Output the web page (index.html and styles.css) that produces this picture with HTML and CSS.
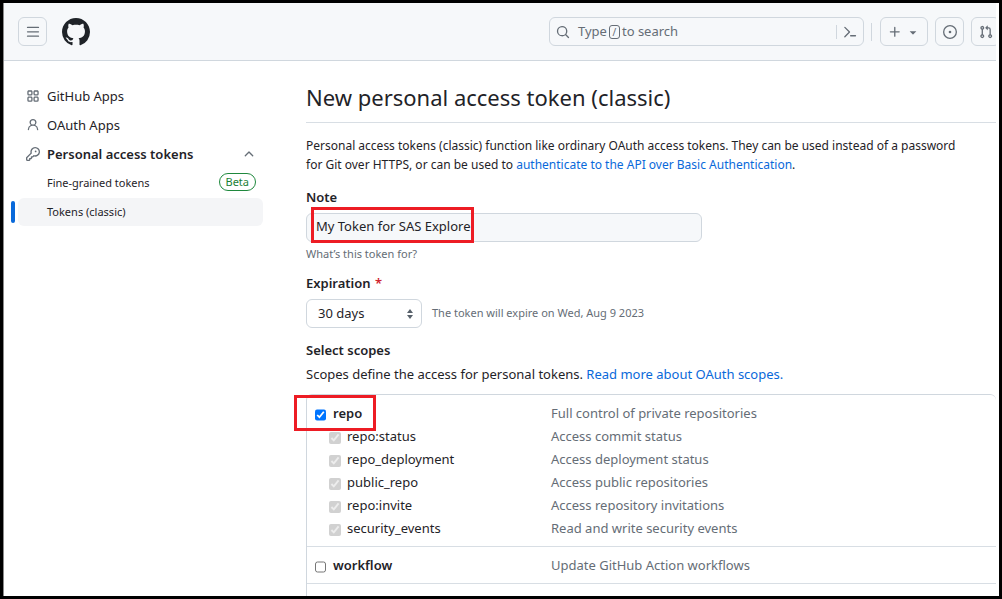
FILE: index.html
```html
<!DOCTYPE html>
<html lang="en">
<head>
<meta charset="utf-8">
<title>New personal access token (classic)</title>
<link rel="stylesheet" href="styles.css">
</head>
<body>
<div class="page">
  <header class="topbar">
    <button class="icon-button" type="button" aria-label="Open menu">
      <svg class="icon" viewBox="0 0 16 16"><path d="M1 2.75A.75.75 0 0 1 1.75 2h12.5a.75.75 0 0 1 0 1.5H1.75A.75.75 0 0 1 1 2.75Zm0 5A.75.75 0 0 1 1.75 7h12.5a.75.75 0 0 1 0 1.5H1.75A.75.75 0 0 1 1 7.75ZM1.75 12h12.5a.75.75 0 0 1 0 1.5H1.75a.75.75 0 0 1 0-1.5Z"/></svg>
    </button>
    <a class="logo" href="#" aria-label="Home">
      <svg viewBox="0 0 16 16"><path d="M8 0c4.42 0 8 3.58 8 8a8.013 8.013 0 0 1-5.45 7.59c-.4.08-.55-.17-.55-.38 0-.27.01-1.13.01-2.2 0-.75-.25-1.23-.54-1.48 1.78-.2 3.65-.88 3.65-3.95 0-.88-.31-1.59-.82-2.15.08-.2.36-1.02-.08-2.12 0 0-.67-.22-2.2.82-.64-.18-1.32-.27-2-.27-.68 0-1.36.09-2 .27-1.53-1.03-2.2-.82-2.2-.82-.44 1.1-.16 1.92-.08 2.12-.51.56-.82 1.28-.82 2.15 0 3.06 1.86 3.75 3.64 3.95-.23.2-.44.55-.51 1.07-.46.21-1.61.55-2.33-.66-.15-.24-.6-.83-1.23-.82-.67.01-.27.38.01.53.34.19.73.9.82 1.13.16.45.68 1.31 2.69.94 0 .67.01 1.3.01 1.49 0 .21-.15.45-.55.38A7.995 7.995 0 0 1 0 8c0-4.42 3.58-8 8-8Z"/></svg>
    </a>
    <div class="tools">
      <div class="search">
        <button class="search-open" type="button">
          <svg class="icon" viewBox="0 0 16 16"><path d="M10.68 11.74a6 6 0 0 1-7.922-8.982 6 6 0 0 1 8.982 7.922l3.04 3.04a.749.749 0 0 1-.326 1.275.749.749 0 0 1-.734-.215ZM11.5 7a4.499 4.499 0 1 0-8.997 0A4.499 4.499 0 0 0 11.5 7Z"/></svg>
          <span class="search-text">Type <kbd class="key">/</kbd> to search</span>
        </button>
        <button class="search-command" type="button" aria-label="Command palette">
          <svg class="icon" viewBox="0 0 16 16"><path d="m6.354 8.04-4.773 4.773a.75.75 0 1 0 1.061 1.06L7.945 8.57a.75.75 0 0 0 0-1.06L2.642 2.206a.75.75 0 0 0-1.06 1.061L6.353 8.04ZM8.75 11.5a.75.75 0 0 0 0 1.5h5.5a.75.75 0 0 0 0-1.5h-5.5Z"/></svg>
        </button>
      </div>
      <span class="divider"></span>
      <button class="icon-button create" type="button" aria-label="Create new">
        <svg class="icon" viewBox="0 0 16 16"><path d="M7.75 2a.75.75 0 0 1 .75.75V7h4.25a.75.75 0 0 1 0 1.5H8.5v4.25a.75.75 0 0 1-1.5 0V8.5H2.75a.75.75 0 0 1 0-1.5H7V2.75A.75.75 0 0 1 7.75 2Z"/></svg>
        <svg class="icon" viewBox="0 0 16 16"><path d="m4.427 7.427 3.396 3.396a.25.25 0 0 0 .354 0l3.396-3.396A.25.25 0 0 0 11.396 7H4.604a.25.25 0 0 0-.177.427Z"/></svg>
      </button>
      <button class="icon-button" type="button" aria-label="Issues">
        <svg class="icon" viewBox="0 0 16 16"><path d="M8 9.5a1.5 1.5 0 1 0 0-3 1.5 1.5 0 0 0 0 3Z"/><path d="M8 0a8 8 0 1 1 0 16A8 8 0 0 1 8 0ZM1.5 8a6.5 6.5 0 1 0 13 0 6.5 6.5 0 0 0-13 0Z"/></svg>
      </button>
      <button class="icon-button" type="button" aria-label="Pull requests">
        <svg class="icon" viewBox="0 0 16 16"><path d="M1.5 3.25a2.25 2.25 0 1 1 3 2.122v5.256a2.251 2.251 0 1 1-1.5 0V5.372A2.25 2.25 0 0 1 1.5 3.25Zm5.677-.177L9.573.677A.25.25 0 0 1 10 .854V2.5h1A2.5 2.5 0 0 1 13.5 5v5.628a2.251 2.251 0 1 1-1.5 0V5a1 1 0 0 0-1-1h-1v1.646a.25.25 0 0 1-.427.177L7.177 3.427a.25.25 0 0 1 0-.354ZM3.75 2.5a.75.75 0 1 0 0 1.5.75.75 0 0 0 0-1.5Zm0 9.5a.75.75 0 1 0 0 1.5.75.75 0 0 0 0-1.5Zm8.25.75a.75.75 0 1 0 1.5 0 .75.75 0 0 0-1.5 0Z"/></svg>
      </button>
    </div>
  </header>

  <div class="columns">
    <nav class="sidebar" aria-label="Developer settings">
      <a class="nav-item" href="#">
        <svg class="icon" viewBox="0 0 16 16"><path d="M1.5 3.25c0-.966.784-1.75 1.75-1.75h2.5c.966 0 1.75.784 1.75 1.75v2.5A1.75 1.75 0 0 1 5.75 7.5h-2.5A1.75 1.75 0 0 1 1.500 5.75Zm7 0c0-.966.784-1.75 1.75-1.75h2.5c.966 0 1.75.784 1.75 1.75v2.5a1.75 1.75 0 0 1-1.750 1.75h-2.5A1.75 1.75 0 0 1 8.500 5.75Zm-7 7c0-.966.784-1.75 1.75-1.75h2.5c.966 0 1.75.784 1.75 1.75v2.5a1.75 1.75 0 0 1-1.750 1.75h-2.5a1.75 1.75 0 0 1-1.750-1.75Zm7 0c0-.966.784-1.75 1.75-1.75h2.5c.966 0 1.75.784 1.75 1.75v2.5a1.75 1.75 0 0 1-1.750 1.75h-2.5a1.75 1.75 0 0 1-1.750-1.75ZM3.250 3a.25.25 0 0 0-.25.25v2.5c0 .138.112.25.25.25h2.5A.25.25 0 0 0 6 5.750v-2.5A.25.25 0 0 0 5.750 3Zm7 0a.25.25 0 0 0-.25.25v2.5c0 .138.112.25.25.25h2.5a.25.25 0 0 0 .25-.25v-2.5a.25.25 0 0 0-.25-.25Zm-7 7a.25.25 0 0 0-.25.25v2.5c0 .138.112.25.25.25h2.5a.25.25 0 0 0 .25-.25v-2.5a.25.25 0 0 0-.25-.25Zm7 0a.25.25 0 0 0-.25.25v2.5c0 .138.112.25.25.25h2.5a.25.25 0 0 0 .25-.25v-2.5a.25.25 0 0 0-.25-.25Z"/></svg>
        <span>GitHub Apps</span>
      </a>
      <a class="nav-item" href="#">
        <svg class="icon" viewBox="0 0 16 16"><path d="M10.561 8.073a6.005 6.005 0 0 1 3.432 5.142.75.75 0 1 1-1.498.07 4.5 4.5 0 0 0-8.99 0 .75.75 0 0 1-1.498-.07 6.004 6.004 0 0 1 3.431-5.142 3.999 3.999 0 1 1 5.123 0ZM10.500 5a2.5 2.5 0 1 0-5 0 2.5 2.5 0 0 0 5 0Z"/></svg>
        <span>OAuth Apps</span>
      </a>
      <a class="nav-item open" href="#">
        <svg class="icon" viewBox="0 0 16 16"><path d="M10.500 0a5.499 5.499 0 1 1-1.288 10.848l-.932.932a.749.749 0 0 1-.530.22H7v.75a.749.749 0 0 1-.22.53l-.5.5a.749.749 0 0 1-.53.22H5v.75a.749.749 0 0 1-.22.53l-.5.5a.749.749 0 0 1-.53.22h-2A1.750 1.750 0 0 1 0 14.250v-2c0-.199.079-.389.22-.53l4.932-4.932A5.500 5.500 0 0 1 10.500 0Zm-4 5.500c-.001.431.069.86.205 1.269a.75.75 0 0 1-.181.768L1.500 12.560v1.690c0 .138.112.25.25.25h1.690l.06-.06v-1.190a.75.75 0 0 1 .75-.75h1.190l.06-.06v-1.190a.75.75 0 0 1 .75-.75h1.190l1.023-1.025a.75.75 0 0 1 .768-.18A4 4 0 1 0 6.500 5.500ZM11 6a1 1 0 1 1 0-2 1 1 0 0 1 0 2Z"/></svg>
        <span>Personal access tokens</span>
        <svg class="icon caret" viewBox="0 0 16 16"><path d="M3.220 10.530a.749.749 0 0 1 0-1.060l4.250-4.250a.749.749 0 0 1 1.060 0l4.250 4.250a.749.749 0 1 1-1.060 1.060L8 6.811 4.280 10.530a.749.749 0 0 1-1.060 0Z"/></svg>
      </a>
      <a class="nav-item sub" href="#"><span>Fine-grained tokens</span><span class="beta">Beta</span></a>
      <a class="nav-item sub current" href="#" aria-current="page"><span>Tokens (classic)</span></a>
    </nav>

    <main class="content">
      <h1 class="title">New personal access token (classic)</h1>
      <p class="intro">Personal access tokens (classic) function like ordinary OAuth access tokens. They can be used instead of a password for Git over HTTPS, or can be used to <a class="link" href="#">authenticate to the API over Basic Authentication</a>.</p>

      <label class="label" for="note">Note</label>
      <div class="note-field">
        <input class="note" id="note" type="text" value="My Token for SAS Explore">
        <span class="mark mark-note"></span>
      </div>
      <p class="hint">What’s this token for?</p>

      <label class="label" for="expiration">Expiration <span class="required">*</span></label>
      <div class="expiration">
        <div class="select-wrap">
          <select class="select" id="expiration"><option>30 days</option></select>
          <svg class="select-arrows" viewBox="0 0 8 10"><path d="M4 0 7 4H1ZM1 6h6L4 10Z"/></svg>
        </div>
        <span class="expires">The token will expire on Wed, Aug 9 2023</span>
      </div>

      <h2 class="label">Select scopes</h2>
      <p class="scopes-intro">Scopes define the access for personal tokens. <a class="link" href="#">Read more about OAuth scopes.</a></p>

      <ul class="scopes">
        <li class="scope-group">
          <div class="scope parent"><input class="check" type="checkbox" id="repo" checked><label class="name" for="repo">repo</label><span class="about">Full control of private repositories</span><span class="mark mark-repo"></span></div>
          <div class="scope child"><input class="check" type="checkbox" id="status" checked disabled><label class="name" for="status">repo:status</label><span class="about">Access commit status</span></div>
          <div class="scope child"><input class="check" type="checkbox" id="deployment" checked disabled><label class="name" for="deployment">repo_deployment</label><span class="about">Access deployment status</span></div>
          <div class="scope child"><input class="check" type="checkbox" id="public" checked disabled><label class="name" for="public">public_repo</label><span class="about">Access public repositories</span></div>
          <div class="scope child"><input class="check" type="checkbox" id="invite" checked disabled><label class="name" for="invite">repo:invite</label><span class="about">Access repository invitations</span></div>
          <div class="scope child"><input class="check" type="checkbox" id="security" checked disabled><label class="name" for="security">security_events</label><span class="about">Read and write security events</span></div>
        </li>
        <li class="scope-group">
          <div class="scope parent"><input class="check" type="checkbox" id="workflow"><label class="name" for="workflow">workflow</label><span class="about">Update GitHub Action workflows</span></div>
        </li>
        <li class="scope-group more"></li>
      </ul>
    </main>
  </div>
</div>
</body>
</html>
```
FILE: styles.css
```css
* {
  box-sizing: border-box;
}

body {
  margin: 0;
  height: 100vh;
  border: 3px solid #000;
  overflow: hidden;
  background: #fff;
  color: #1f2328;
  font: 13px/19px "Noto Sans", sans-serif;
}

h1, h2, p, ul {
  margin: 0;
  padding: 0;
}

button, input, select {
  margin: 0;
  font: inherit;
  color: inherit;
}

.page {
  display: flex;
  flex-direction: column;
  height: 100%;
  margin-right: 3px;
  border-left: 1px solid #8b8b8b;
  overflow: hidden;
}

.icon {
  flex: none;
  width: 14px;
  height: 14px;
  fill: #656d76;
}

.topbar {
  flex: none;
  display: flex;
  align-items: center;
  gap: 15px;
  height: 58px;
  padding-left: 14px;
  background: #f6f8fa;
  border-bottom: 1px solid #d0d7de;
}

.icon-button {
  flex: none;
  display: flex;
  align-items: center;
  justify-content: center;
  width: 29px;
  height: 29px;
  padding: 0;
  border: 1px solid #d0d7de;
  border-radius: 6px;
  background: transparent;
}

.logo {
  width: 28px;
  height: 28px;
}

.logo svg {
  display: block;
  fill: #1f2328;
}

.tools {
  display: flex;
  align-items: center;
  gap: 7px;
  margin-left: auto;
  margin-right: -4px;
}

.search {
  display: flex;
  align-items: center;
  width: 315px;
  height: 29px;
  border: 1px solid #d0d7de;
  border-radius: 6px;
  color: #656d76;
}

.search-open,
.search-command {
  display: flex;
  align-items: center;
  padding: 0;
  border: 0;
  background: none;
}

.search-open {
  flex: 1;
  gap: 8px;
  padding-left: 6px;
}

.search-command {
  height: 14px;
  padding: 0 6px;
  border-left: 1px solid #d0d7de;
}

.search-text {
  display: flex;
  align-items: center;
  gap: 2px;
}

.key {
  width: 11px;
  height: 14px;
  border: 1px solid #656d76;
  border-radius: 3px;
  font: 10px/12px "Noto Sans", sans-serif;
  text-align: center;
}

.divider {
  width: 1px;
  height: 18px;
  background: #d0d7de;
}

.create {
  width: 48px;
  gap: 4px;
  margin-left: 1px;
}

.columns {
  flex: 1;
  display: flex;
  gap: 43px;
  padding-left: 14px;
}

.sidebar {
  flex: none;
  display: flex;
  flex-direction: column;
  gap: 1px;
  width: 245px;
  padding-top: 21px;
}

.nav-item {
  position: relative;
  display: flex;
  align-items: center;
  gap: 7px;
  height: 28px;
  padding: 0 7px 0 8px;
  border-radius: 6px;
  color: inherit;
  text-decoration: none;
}

.open {
  font-weight: 600;
}

.caret {
  margin-left: auto;
}

.sub {
  padding: 0 7px 2px 29px;
  font-size: 11px;
}

.current {
  background: #f4f5f7;
}

.current::before {
  content: "";
  position: absolute;
  left: -7px;
  top: 3px;
  width: 4px;
  height: 22px;
  border-radius: 6px;
  background: #0969da;
}

.beta {
  margin-left: auto;
  padding: 0 6px;
  border: 1px solid #1f883d;
  border-radius: 9px;
  color: #1a7f37;
  line-height: 16px;
}

.content {
  flex: 1;
  min-width: 0;
  padding-top: 20px;
}

.title {
  margin-bottom: 13px;
  padding-bottom: 8px;
  border-bottom: 1px solid #d8dee4;
  font-size: 22px;
  font-weight: 400;
  line-height: 33px;
}

.link {
  color: #0969da;
  text-decoration: none;
}

.label {
  display: block;
  font-size: 13px;
  font-weight: 600;
  line-height: 19px;
}

.intro {
  margin-bottom: 14px;
  padding-right: 26px;
  font-size: 12px;
}

.note-field {
  position: relative;
  width: 396px;
  margin-top: 6px;
}

.note {
  display: block;
  width: 100%;
  height: 29px;
  padding: 0 9px 3px;
  border: 1px solid #d0d7de;
  border-radius: 6px;
  background: #f6f8fa;
}

.mark {
  position: absolute;
  border: 3px solid #ed1c24;
  pointer-events: none;
}

.mark-note {
  left: 5px;
  top: -6px;
  width: 163px;
  height: 36px;
}

.hint {
  margin: 2px 0 11px;
  color: #656d76;
  font-size: 11px;
}

.required {
  margin-left: 1px;
  color: #cf222e;
}

.expiration {
  display: flex;
  align-items: center;
  gap: 10px;
  margin: 6px 0 13px;
}

.select-wrap {
  position: relative;
  width: 116px;
}

.select {
  display: block;
  appearance: none;
  width: 100%;
  height: 29px;
  padding: 0 11px;
  border: 1px solid #d0d7de;
  border-radius: 6px;
  background: #fff;
}

.select-arrows {
  position: absolute;
  right: 8px;
  top: 10px;
  width: 8px;
  height: 10px;
  fill: #57606a;
  pointer-events: none;
}

.expires {
  padding-bottom: 2px;
  color: #656d76;
  font-size: 11px;
}

.scopes-intro {
  margin: 5px 0 10px;
}

.scopes {
  list-style: none;
  border: 1px solid #d0d7de;
  border-right: 0;
  border-radius: 6px;
}

.scope-group {
  padding: 7px 0 6px 8px;
}

.scope-group + .scope-group {
  border-top: 1px solid #d8dee4;
}

.more {
  min-height: 37px;
}

.scope {
  position: relative;
  display: grid;
  align-items: center;
  height: 23px;
}

.parent {
  grid-template-columns: 11px 211px 1fr;
  column-gap: 7px;
  font-weight: 600;
}

.child {
  grid-template-columns: 12px 198px 1fr;
  column-gap: 6px;
  padding-left: 14px;
}

.check {
  width: 100%;
  height: 12px;
  margin-top: 2px;
}

.about {
  color: #656d76;
  font-weight: 400;
}

.mark-repo {
  left: -21px;
  top: -7px;
  width: 82px;
  height: 36px;
}
```
